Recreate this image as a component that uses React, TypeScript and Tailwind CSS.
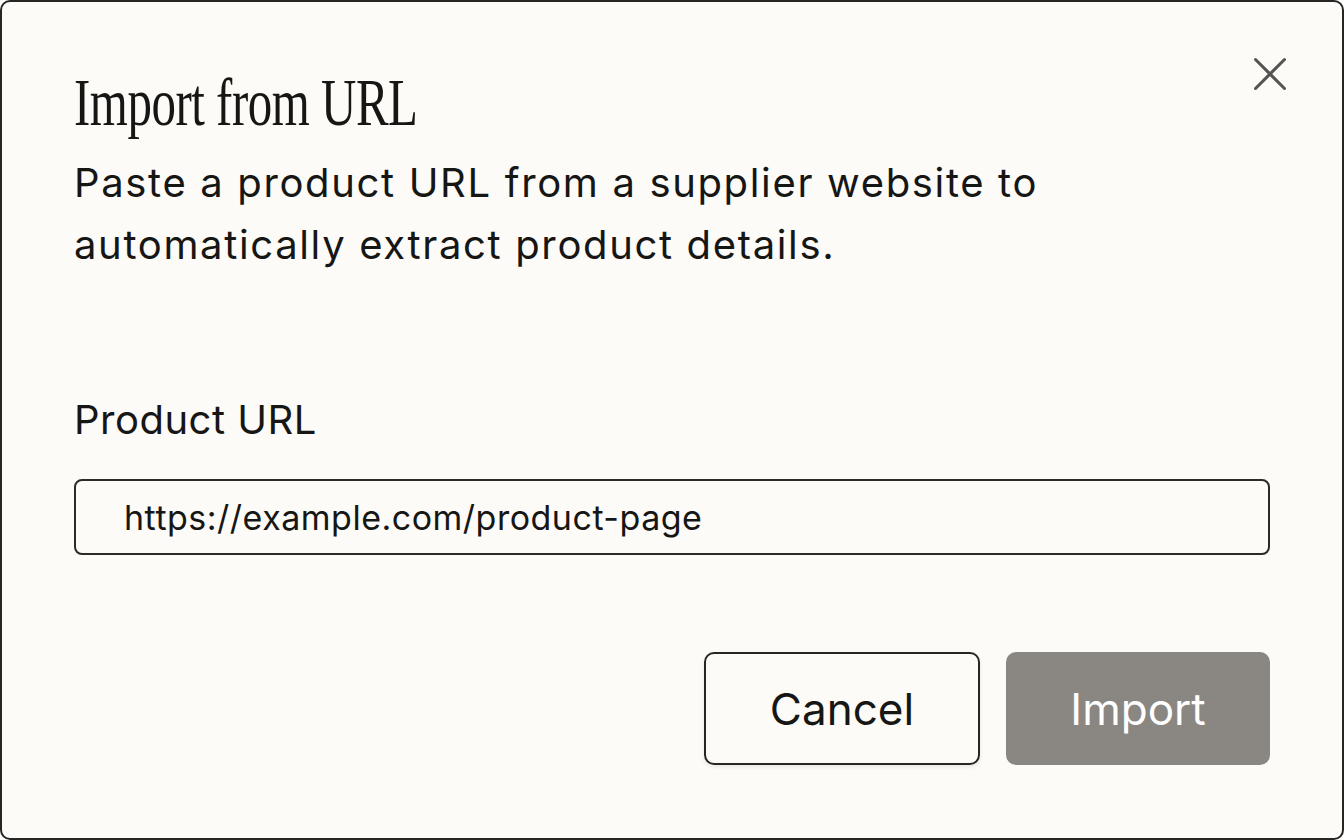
import { X } from "lucide-react";

export default function App() {
  return (
    <div className="relative h-screen w-full overflow-hidden rounded-[10px] border-2 border-[#262624] bg-[#fcfbf7] px-[72px] pt-[66px] text-[#161614] font-['Inter','Noto_Sans',sans-serif]">
      <button
        type="button"
        aria-label="Close"
        className="absolute right-[43px] top-[43px] text-[#555452]"
      >
        <X size={58} strokeWidth={1.25} />
      </button>

      <h2 className="origin-left scale-x-[0.72] whitespace-nowrap font-['Liberation_Serif',serif] text-[68px] leading-none tracking-[-0.01em]">
        Import from URL
      </h2>
      <p className="mt-[16px] max-w-[1060px] text-[40px] leading-[62px] tracking-[1.65px]">
        Paste a product URL from a supplier website to automatically extract product details.
      </p>

      <label className="mt-[115px] block text-[40px] leading-[57px] tracking-[0.5px]" htmlFor="product-url">
        Product URL
      </label>
      <input
        id="product-url"
        defaultValue="https://example.com/product-page"
        className="mt-[31px] block h-[76px] w-full rounded-[8px] border-2 border-[#2a2a28] bg-transparent pl-[48px] text-[34px] tracking-[0.5px] text-[#161614] outline-none"
      />

      <div className="mt-[97px] flex justify-end gap-[26px]">
        <button
          type="button"
          className="h-[113px] w-[276px] rounded-[10px] border-2 border-[#262624] bg-[#fcfbf7] text-[44px] shadow-[0_2px_4px_rgba(0,0,0,0.08)]"
        >
          Cancel
        </button>
        <button
          type="button"
          className="h-[113px] w-[264px] rounded-[10px] bg-[#8a8782] text-[44px] text-white"
        >
          Import
        </button>
      </div>
    </div>
  );
}
